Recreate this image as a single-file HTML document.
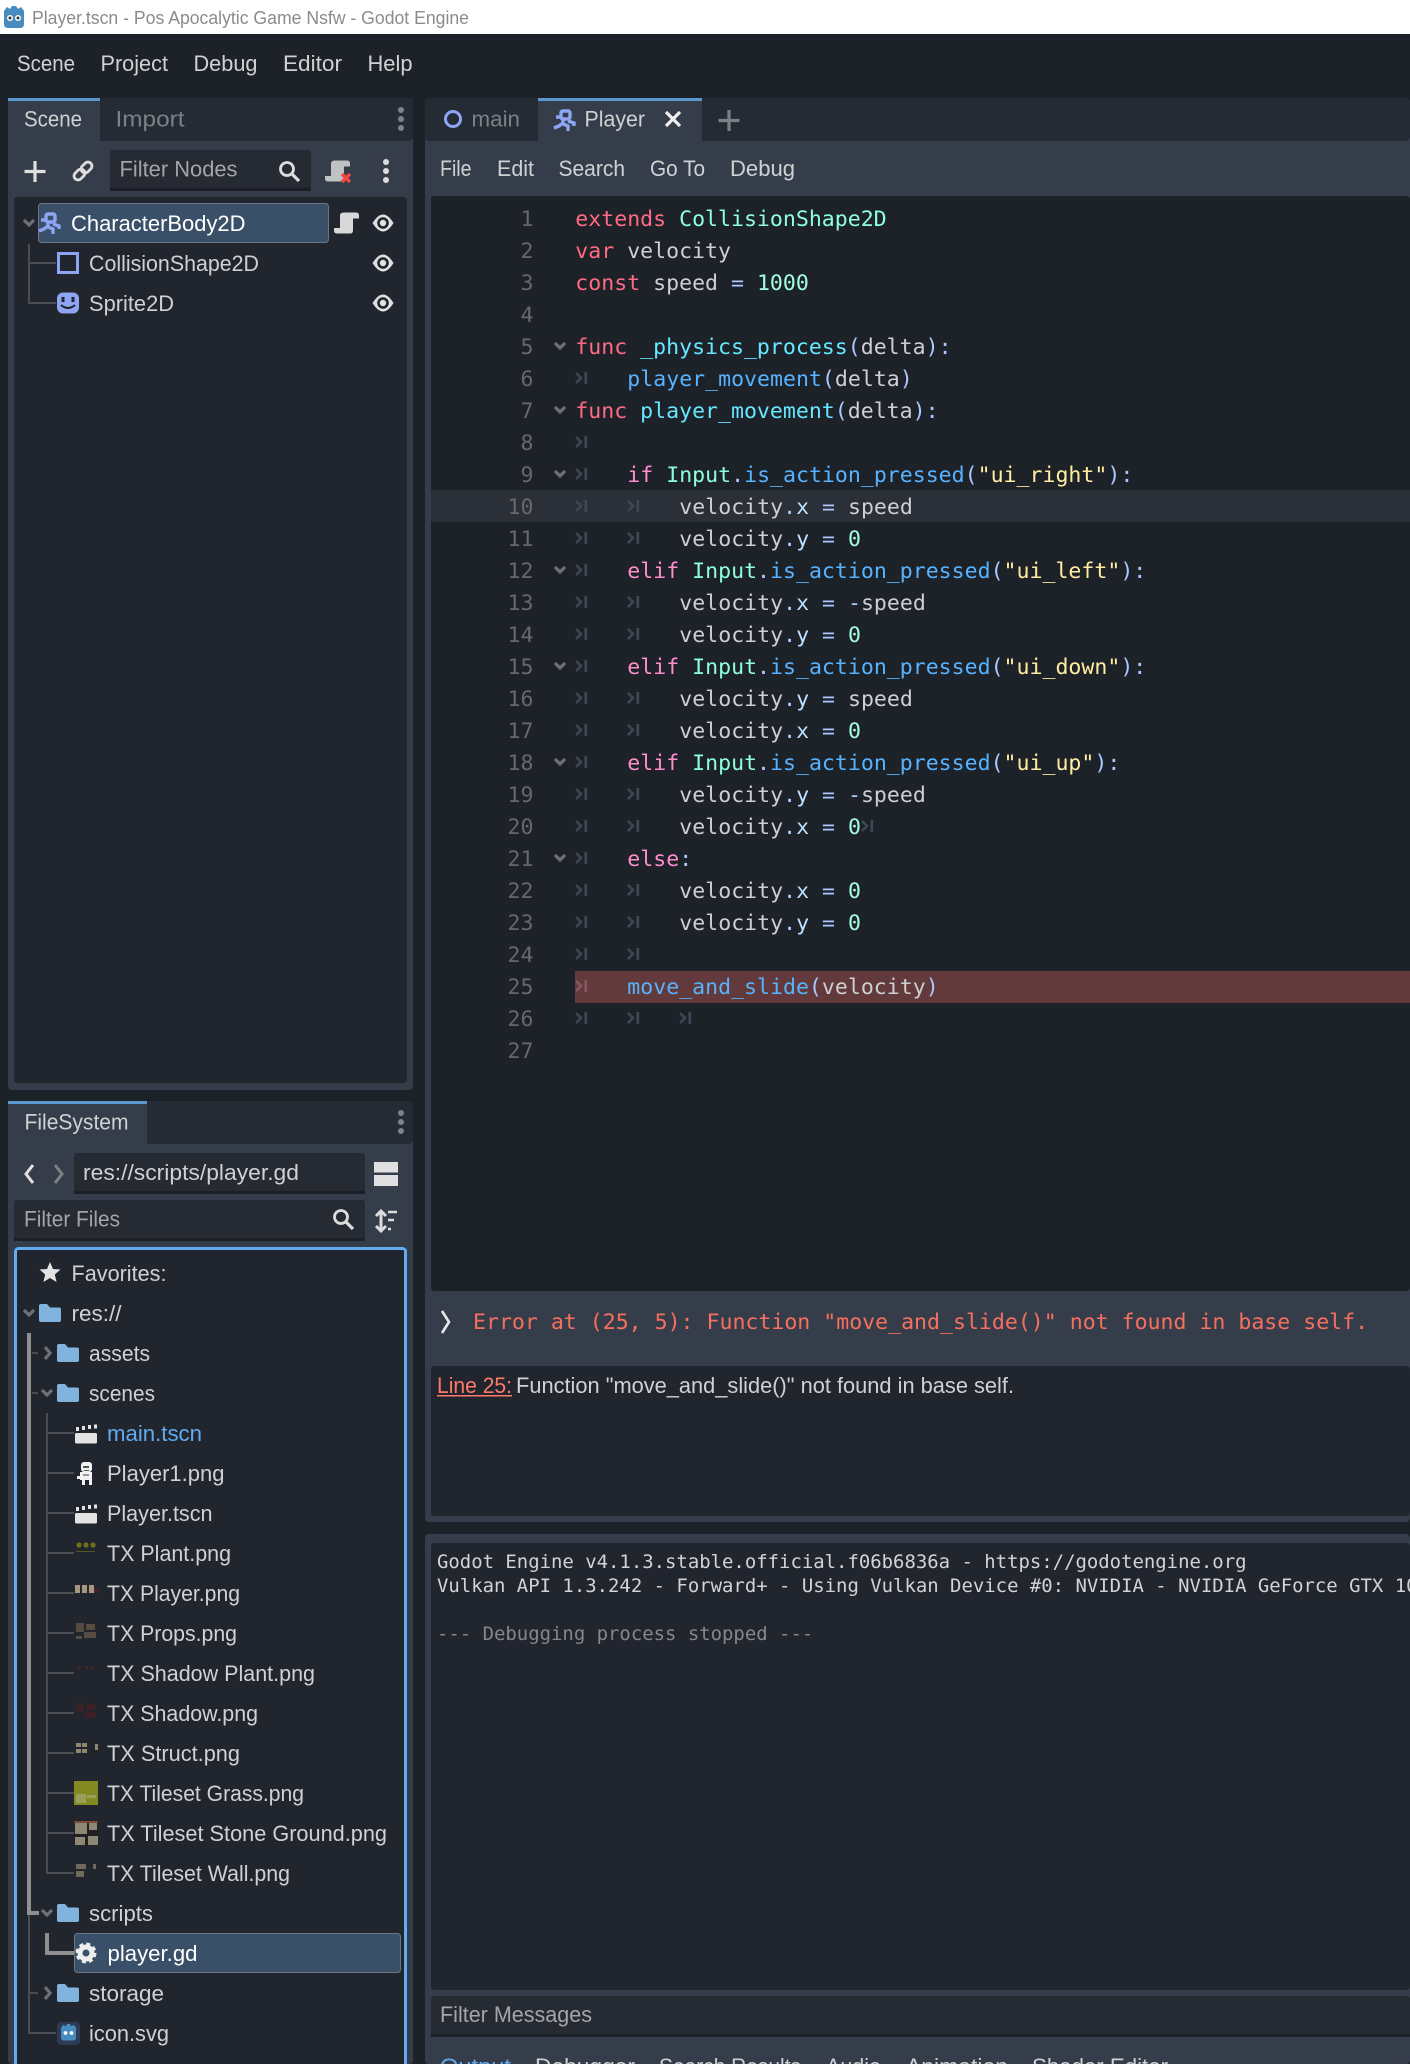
<!DOCTYPE html>
<html><head><meta charset="utf-8"><title>Godot</title>
<style>
html,body{margin:0;padding:0;background:#1d2229;width:1410px;height:2064px;overflow:hidden}
svg{display:block}
text{white-space:pre}
.u{font-family:"Liberation Sans",sans-serif;font-size:22px;fill:#d0d1d3}
.dim{fill:#a3a5a9}
.mut{fill:#7d8085}
.w{fill:#fff}
.b{fill:#62abf0}
.cd{font-family:"DejaVu Sans Mono","Liberation Mono",monospace;font-size:21.55px;fill:#cdcfd2}
.ln{fill:#66686d;text-anchor:end}
.k{fill:#ff6b82}.c{fill:#ff8ccc}.e{fill:#8fffdb}.f{fill:#57b3ff}.d{fill:#66e6ff}.s{fill:#abc9ff}.m{fill:#bce0ff}.n{fill:#a1ffe0}.q{fill:#ffeda1}
.op{font-family:"DejaVu Sans Mono","Liberation Mono",monospace;font-size:18.95px;fill:#d2d3d5}
.ch{fill:none;stroke:#6d7076;stroke-width:3.2}
.tl{stroke:#4a4d54;stroke-width:2;fill:none}
.th{fill:#8f8f8f}
</style></head><body>
<svg xmlns="http://www.w3.org/2000/svg" width="1410" height="2064" viewBox="0 0 1410 2064">
<defs>
<g id="t"><path d="M1 -5l5 5l-5 5" fill="none" stroke="#3f4756" stroke-width="2.6"/><rect x="9.5" y="-6" width="2.6" height="12" fill="#3f4756"/></g>
<g id="tr"><path d="M1 -5l5 5l-5 5" fill="none" stroke="#8a5560" stroke-width="2.6"/><rect x="9.5" y="-6" width="2.6" height="12" fill="#8a5560"/></g>
<path id="fd" d="M-5 -3l5 5l5 -5" class="ch" stroke="#5c5f65"/>
<g id="eye"><path d="M-10.500 0Q0 -17 10.500 0Q0 17 -10.500 0Z" fill="#e0e0e0"/><circle r="5.800" fill="#21252e"/><circle r="3.200" fill="#e0e0e0"/></g>
<path id="fo" d="M0 2q0-2 2-2h6l3 3.500h9q2 0 2 2v10.500q0 2-2 2H2q-2 0-2-2z" fill="#80b3dd"/>
<g id="cl"><rect x="-11" y="0" width="22" height="10.500" rx="1.500" fill="#e3e3e3"/><path d="M-10 -6v4h3v-4zM-4 -7v4h3v-4zM2 -8v4h3v-4zM8 -8.500v4h3v-4z" fill="#e3e3e3"/></g>
<g id="run" fill="none" stroke="#8da5f3" stroke-width="3.400"><rect x="-3" y="-9" width="9" height="8" rx="2"/><path d="M-1 -1v5l5 2v5M-1 3l-4 3l-5 2M-3 -3h-5M4 1l6 2v3"/></g>
<path id="sc" d="M-4 -10.500h12q3 0 3 3v3h-6v12q0 3-3 3h-13q-3 0-3-3v-2.500h6v-12.500q0-3 4-3z" fill="#d8d8d8"/>
<g id="se" fill="none" stroke="#dcdcdc" stroke-width="2.800"><circle cx="-3" cy="-3" r="6.500"/><path d="M2 2l7 7" stroke-width="3.200"/></g>
</defs>

<rect width="1410" height="2064" fill="#1d2229"/>
<!-- title bar -->
<rect width="1410" height="34" fill="#fff"/>
<g transform="translate(14,18)"><path d="M-10 -7l3-4 3 2 2-3h4l2 3 3-2 3 4v13q0 4-4 4h-12q-4 0-4-4z" fill="#478cbf"/><circle cx="-4" cy="0" r="3" fill="#fff"/><circle cx="4" cy="0" r="3" fill="#fff"/><circle cx="-4" cy="0" r="1.500" fill="#333"/><circle cx="4" cy="0" r="1.500" fill="#333"/></g>
<text x="32" y="24" font-family="Liberation Sans,sans-serif" font-size="18" fill="#8b8b8b" textLength="437" lengthAdjust="spacingAndGlyphs">Player.tscn - Pos Apocalytic Game Nsfw - Godot Engine</text>

<!-- menu -->
<text class="u" x="17" y="71" textLength="58" lengthAdjust="spacingAndGlyphs">Scene</text>
<text class="u" x="100.500" y="71" textLength="67.500" lengthAdjust="spacingAndGlyphs">Project</text>
<text class="u" x="193.500" y="71" textLength="64" lengthAdjust="spacingAndGlyphs">Debug</text>
<text class="u" x="283" y="71" textLength="59" lengthAdjust="spacingAndGlyphs">Editor</text>
<text class="u" x="367.500" y="71" textLength="45" lengthAdjust="spacingAndGlyphs">Help</text>

<!-- scene panel -->
<rect x="8" y="98" width="405" height="992" rx="4" fill="#363d4a"/>
<rect x="8" y="98" width="405" height="43" rx="4" fill="#252b34"/>
<rect x="8" y="98" width="92" height="43" fill="#363d4a"/>
<rect x="8" y="98" width="92" height="3" fill="#5a97cf"/>
<text class="u" x="24" y="126.500" textLength="58" lengthAdjust="spacingAndGlyphs">Scene</text>
<text class="u mut" x="115.500" y="126.500" textLength="69" lengthAdjust="spacingAndGlyphs">Import</text>
<g fill="#808287"><circle cx="401" cy="110" r="3"/><circle cx="401" cy="119" r="3"/><circle cx="401" cy="128" r="3"/></g>
<path d="M35 161v21M24.500 171.500h21" stroke="#e0e0e0" stroke-width="3.200"/>
<g transform="translate(83,171) rotate(-45)" fill="none" stroke="#dcdcdc" stroke-width="2.800"><rect x="-11" y="-4" width="12" height="8" rx="4"/><rect x="-1" y="-4" width="12" height="8" rx="4"/></g>
<rect x="110" y="150" width="201" height="41" rx="3" fill="#252a33"/>
<rect x="110" y="188" width="201" height="3" fill="#1c2026"/>
<text class="u dim" x="119.500" y="176.500" textLength="118" lengthAdjust="spacingAndGlyphs">Filter Nodes</text>
<use href="#se" x="290" y="172"/>
<use href="#sc" x="339" y="171" opacity=".85"/>
<path d="M342 174l8 8m0-8l-8 8" stroke="#f0493f" stroke-width="3.400"/>
<g fill="#dcdcdc"><circle cx="386" cy="162" r="3"/><circle cx="386" cy="171" r="3"/><circle cx="386" cy="180" r="3"/></g>

<rect x="14" y="197" width="393" height="886" rx="3" fill="#21252e"/>
<rect x="38.500" y="203.500" width="290" height="39" rx="3" fill="#3a5068" stroke="#6b7684"/>
<path d="M24 220l5 5l5-5" class="ch"/>
<use href="#run" x="49" y="223"/>
<text class="u w" x="71" y="231" textLength="174.500" lengthAdjust="spacingAndGlyphs">CharacterBody2D</text>
<use href="#sc" x="348" y="223"/>
<use href="#eye" x="383" y="223"/>
<path d="M29 244v59h27M29 263h27" class="tl"/>
<rect x="58.500" y="253.500" width="19" height="19" fill="none" stroke="#8da5f3" stroke-width="3"/>
<text class="u" x="89" y="271" textLength="170" lengthAdjust="spacingAndGlyphs">CollisionShape2D</text>
<use href="#eye" x="383" y="263"/>
<rect x="57" y="292.500" width="22" height="21" rx="6" fill="#8da5f3"/>
<path d="M61 305q7 6 14 0" stroke="#21252e" stroke-width="2" fill="none"/><path d="M63 297v5M73 297v5" stroke="#21252e" stroke-width="3"/>
<text class="u" x="89" y="311" textLength="85" lengthAdjust="spacingAndGlyphs">Sprite2D</text>
<use href="#eye" x="383" y="303"/>

<!-- filesystem panel -->
<rect x="8" y="1101" width="405" height="963" rx="4" fill="#363d4a"/>
<rect x="8" y="1101" width="405" height="43" rx="4" fill="#252b34"/>
<rect x="8" y="1101" width="139" height="43" fill="#363d4a"/>
<rect x="8" y="1101" width="139" height="3" fill="#5a97cf"/>
<text class="u" x="24.500" y="1129.500" textLength="104" lengthAdjust="spacingAndGlyphs">FileSystem</text>
<g fill="#808287"><circle cx="401" cy="1113" r="3"/><circle cx="401" cy="1122" r="3"/><circle cx="401" cy="1131" r="3"/></g>
<path d="M33 1165l-7 9l7 9" fill="none" stroke="#e0e0e0" stroke-width="3"/>
<path d="M55 1165l7 9l-7 9" fill="none" stroke="#7d8085" stroke-width="3"/>
<rect x="74" y="1153" width="291" height="41" rx="3" fill="#252a33"/>
<rect x="74" y="1191" width="291" height="3" fill="#1c2026"/>
<text class="u" x="83" y="1180" textLength="216" lengthAdjust="spacingAndGlyphs">res://scripts/player.gd</text>
<rect x="374" y="1162" width="24" height="10.500" fill="#e0e0e0"/><rect x="374" y="1175" width="24" height="11" fill="#e0e0e0"/>
<rect x="14" y="1200" width="351" height="41" rx="3" fill="#252a33"/>
<rect x="14" y="1238" width="351" height="3" fill="#1c2026"/>
<text class="u dim" x="24" y="1226.500" textLength="96" lengthAdjust="spacingAndGlyphs">Filter Files</text>
<use href="#se" x="344" y="1220"/>
<path d="M381 1212v18M376 1216l5-5l5 5M376 1226l5 5l5-5" fill="none" stroke="#dcdcdc" stroke-width="3"/>
<path d="M388 1212h9M388 1220h6M388 1229h3" stroke="#dcdcdc" stroke-width="2.600"/>

<rect x="15.500" y="1248.500" width="390" height="830" rx="3" fill="#21252e" stroke="#62abf0" stroke-width="3"/>

<!-- fs tree lines -->
<rect x="27" y="1333" width="4" height="582" class="th"/>
<rect x="27" y="1911" width="12" height="4" class="th"/>
<path d="M29 1915v118h27M29 1993h9M32 1353h6M32 1393h6" class="tl" stroke-width="2"/>
<path d="M47 1413v460h27M47 1433h27M47 1473h27M47 1513h27M47 1553h27M47 1593h27M47 1633h27M47 1673h27M47 1713h27M47 1753h27M47 1793h27M47 1833h27" class="tl"/>
<path d="M47 1933v20h27" fill="none" stroke="#8f8f8f" stroke-width="4"/>

<path d="M50 1262l3 7 7.500.5-5.700 5 1.800 7.500-6.600-4-6.600 4 1.800-7.500-5.700-5 7.500-.5z" fill="#e3e3e3"/>
<text class="u" x="71.500" y="1281" textLength="95" lengthAdjust="spacingAndGlyphs">Favorites:</text>
<path d="M24 1310l5 5l5-5" class="ch"/>
<use href="#fo" x="39" y="1304"/>
<text class="u" x="71.500" y="1321" textLength="50" lengthAdjust="spacingAndGlyphs">res://</text>
<path d="M45 1347l5 6l-5 6" class="ch"/>
<use href="#fo" x="57" y="1344"/>
<text class="u" x="89" y="1361" textLength="61" lengthAdjust="spacingAndGlyphs">assets</text>
<path d="M42 1390l5 5l5-5" class="ch"/>
<use href="#fo" x="57" y="1384"/>
<text class="u" x="89" y="1401" textLength="66" lengthAdjust="spacingAndGlyphs">scenes</text>

<use href="#cl" x="86" y="1433"/>
<text class="u b" x="107" y="1441" textLength="95" lengthAdjust="spacingAndGlyphs">main.tscn</text>
<g fill="#f2f2f2"><rect x="81" y="1462" width="11" height="10" rx="3"/><rect x="80" y="1472" width="12" height="8"/><rect x="77" y="1476" width="5" height="3"/><rect x="82" y="1480" width="3" height="5"/><rect x="89" y="1480" width="3" height="5"/></g>
<rect x="83" y="1466" width="6" height="2" fill="#555"/><rect x="84" y="1470" width="5" height="1" fill="#555"/><rect x="83" y="1474" width="6" height="2" fill="#999"/>
<text class="u" x="107" y="1481" textLength="117.500" lengthAdjust="spacingAndGlyphs">Player1.png</text>
<use href="#cl" x="86" y="1513"/>
<text class="u" x="107" y="1521" textLength="105.500" lengthAdjust="spacingAndGlyphs">Player.tscn</text>

<g fill="#6f7118"><circle cx="79" cy="1545" r="2.600"/><circle cx="86" cy="1545" r="2.600"/><circle cx="93" cy="1545" r="2.600"/><rect x="76" y="1551" width="19" height="1" fill="#55571c"/></g>
<text class="u" x="107" y="1561" textLength="124" lengthAdjust="spacingAndGlyphs">TX Plant.png</text>
<g fill="#a8967f"><rect x="75" y="1585" width="5" height="8"/><rect x="82" y="1585" width="5" height="8"/><rect x="89" y="1585" width="5" height="8"/></g><rect x="94" y="1589" width="5" height="4" fill="#4a2320"/>
<text class="u" x="107" y="1601" textLength="133" lengthAdjust="spacingAndGlyphs">TX Player.png</text>
<g fill="#6a5a48" opacity=".75"><rect x="76" y="1623" width="8" height="9"/><rect x="86" y="1624" width="9" height="6"/><rect x="84" y="1632" width="12" height="6"/><rect x="76" y="1636" width="6" height="3"/></g>
<text class="u" x="107" y="1641" textLength="130" lengthAdjust="spacingAndGlyphs">TX Props.png</text>
<g fill="#4a2323"><rect x="78" y="1666" width="3" height="3"/><rect x="85" y="1666" width="3" height="3"/><rect x="91" y="1666" width="3" height="3"/></g>
<text class="u" x="107" y="1681" textLength="208" lengthAdjust="spacingAndGlyphs">TX Shadow Plant.png</text>
<g fill="#4a2020" opacity=".6"><rect x="76" y="1703" width="8" height="9"/><rect x="86" y="1704" width="9" height="6"/><rect x="84" y="1712" width="12" height="6"/></g>
<text class="u" x="107" y="1721" textLength="151" lengthAdjust="spacingAndGlyphs">TX Shadow.png</text>
<g fill="#8f866c"><rect x="76" y="1743" width="5" height="4"/><rect x="82" y="1743" width="5" height="4"/><rect x="76" y="1749" width="5" height="4"/><rect x="82" y="1749" width="5" height="4"/><rect x="95" y="1744" width="3" height="6"/></g>
<text class="u" x="107" y="1761" textLength="133" lengthAdjust="spacingAndGlyphs">TX Struct.png</text>
<rect x="74" y="1781" width="24" height="24" fill="#848a22"/><rect x="76" y="1794" width="10" height="9" fill="#9aa05a"/><rect x="87" y="1795" width="9" height="3" fill="#9aa05a"/>
<text class="u" x="107" y="1801" textLength="197" lengthAdjust="spacingAndGlyphs">TX Tileset Grass.png</text>
<rect x="74" y="1821" width="24" height="24" fill="#211f20"/><g fill="#8f8776"><rect x="75" y="1822" width="12" height="12"/><rect x="89" y="1822" width="8" height="8"/><rect x="75" y="1837" width="10" height="8"/><rect x="88" y="1836" width="10" height="9"/></g><rect x="74" y="1821" width="24" height="2" fill="#7a4a35"/>
<text class="u" x="107" y="1841" textLength="280" lengthAdjust="spacingAndGlyphs">TX Tileset Stone Ground.png</text>
<g fill="#6f6a5c"><rect x="76" y="1864" width="10" height="5"/><rect x="76" y="1871" width="8" height="6"/><rect x="93" y="1864" width="3" height="5"/></g>
<text class="u" x="107" y="1881" textLength="183" lengthAdjust="spacingAndGlyphs">TX Tileset Wall.png</text>

<path d="M42 1910l5 5l5-5" class="ch"/>
<use href="#fo" x="57" y="1904"/>
<text class="u" x="89" y="1921" textLength="64" lengthAdjust="spacingAndGlyphs">scripts</text>
<rect x="74.500" y="1933.500" width="326" height="39" rx="3" fill="#3a5068" stroke="#6b7684"/>
<circle cx="86" cy="1953" r="6" fill="none" stroke="#eee" stroke-width="5"/><circle cx="86" cy="1953" r="9" fill="none" stroke="#eee" stroke-width="3" stroke-dasharray="4 3.070"/>
<text class="u w" x="107.500" y="1961" textLength="90" lengthAdjust="spacingAndGlyphs">player.gd</text>
<path d="M45 1987l5 6l-5 6" class="ch"/>
<use href="#fo" x="57" y="1984"/>
<text class="u" x="89" y="2001" textLength="75" lengthAdjust="spacingAndGlyphs">storage</text>
<rect x="57" y="2022" width="23" height="23" rx="4" fill="#2f3a54"/>
<g transform="translate(68.500,2033) scale(.75)"><path d="M-10 -7l3-4 3 2 2-3h4l2 3 3-2 3 4v13q0 4-4 4h-12q-4 0-4-4z" fill="#478cbf"/><circle cx="-4" cy="0" r="2.500" fill="#fff"/><circle cx="4" cy="0" r="2.500" fill="#fff"/></g>
<text class="u" x="89" y="2041" textLength="80" lengthAdjust="spacingAndGlyphs">icon.svg</text>

<!-- right panel -->
<rect x="425" y="98" width="985" height="1424" rx="4" fill="#363d4a"/>
<rect x="425" y="98" width="985" height="43" rx="4" fill="#252b34"/>
<rect x="538" y="98" width="164" height="43" fill="#363d4a"/>
<rect x="538" y="98" width="164" height="3" fill="#5a97cf"/>
<circle cx="453" cy="119" r="7.500" fill="none" stroke="#8da5f3" stroke-width="3"/>
<text class="u mut" x="471.500" y="126.500" textLength="48.500" lengthAdjust="spacingAndGlyphs">main</text>
<use href="#run" x="564" y="120"/>
<text class="u" x="584.500" y="126.500" textLength="60.500" lengthAdjust="spacingAndGlyphs">Player</text>
<path d="M666 112l14 14m0-14l-14 14" stroke="#f0f0f0" stroke-width="3.200"/>
<path d="M729 110v21M718.500 120.500h21" stroke="#7d8085" stroke-width="3.200"/>
<text class="u" x="440" y="176" textLength="31.500" lengthAdjust="spacingAndGlyphs">File</text>
<text class="u" x="497" y="176" textLength="37" lengthAdjust="spacingAndGlyphs">Edit</text>
<text class="u" x="558.500" y="176" textLength="66.500" lengthAdjust="spacingAndGlyphs">Search</text>
<text class="u" x="650" y="176" textLength="55" lengthAdjust="spacingAndGlyphs">Go To</text>
<text class="u" x="730" y="176" textLength="65" lengthAdjust="spacingAndGlyphs">Debug</text>

<!-- code editor -->
<rect x="431" y="196" width="979" height="1095" rx="3" fill="#1d2229"/>
<rect x="431" y="490" width="979" height="32" fill="#2b2f37"/>
<rect x="575" y="971" width="835" height="32" fill="#623a3b"/>

<g class="cd ln" transform="translate(0.500,1)">
<text x="533" y="225">1</text><text x="533" y="257">2</text><text x="533" y="289">3</text><text x="533" y="321">4</text><text x="533" y="353">5</text><text x="533" y="385">6</text><text x="533" y="417">7</text><text x="533" y="449">8</text><text x="533" y="481">9</text><text x="533" y="513">10</text><text x="533" y="545">11</text><text x="533" y="577">12</text><text x="533" y="609">13</text><text x="533" y="641">14</text><text x="533" y="673">15</text><text x="533" y="705">16</text><text x="533" y="737">17</text><text x="533" y="769">18</text><text x="533" y="801">19</text><text x="533" y="833">20</text><text x="533" y="865">21</text><text x="533" y="897">22</text><text x="533" y="929">23</text><text x="533" y="961">24</text><text x="533" y="993">25</text><text x="533" y="1025">26</text><text x="533" y="1057">27</text>
</g>
<!-- fold -->
<use href="#fd" x="560" y="346"/><use href="#fd" x="560" y="410"/><use href="#fd" x="560" y="474"/><use href="#fd" x="560" y="570"/><use href="#fd" x="560" y="666"/><use href="#fd" x="560" y="762"/><use href="#fd" x="560" y="858"/>
<!-- tabs -->
<use href="#t" x="575" y="378"/><use href="#t" x="575" y="442"/><use href="#t" x="575" y="474"/>
<use href="#t" x="575" y="506"/><use href="#t" x="627" y="506"/>
<use href="#t" x="575" y="538"/><use href="#t" x="627" y="538"/>
<use href="#t" x="575" y="570"/>
<use href="#t" x="575" y="602"/><use href="#t" x="627" y="602"/>
<use href="#t" x="575" y="634"/><use href="#t" x="627" y="634"/>
<use href="#t" x="575" y="666"/>
<use href="#t" x="575" y="698"/><use href="#t" x="627" y="698"/>
<use href="#t" x="575" y="730"/><use href="#t" x="627" y="730"/>
<use href="#t" x="575" y="762"/>
<use href="#t" x="575" y="794"/><use href="#t" x="627" y="794"/>
<use href="#t" x="575" y="826"/><use href="#t" x="627" y="826"/><use href="#t" x="861" y="826"/>
<use href="#t" x="575" y="858"/>
<use href="#t" x="575" y="890"/><use href="#t" x="627" y="890"/>
<use href="#t" x="575" y="922"/><use href="#t" x="627" y="922"/>
<use href="#t" x="575" y="954"/><use href="#t" x="627" y="954"/>
<use href="#tr" x="575" y="986"/>
<use href="#t" x="575" y="1018"/><use href="#t" x="627" y="1018"/><use href="#t" x="679" y="1018"/>

<g class="cd" transform="translate(-0.700,1)">
<text x="576" y="225"><tspan class="k">extends</tspan> <tspan class="e">CollisionShape2D</tspan></text>
<text x="576" y="257"><tspan class="k">var</tspan> velocity</text>
<text x="576" y="289"><tspan class="k">const</tspan> speed <tspan class="s">=</tspan> <tspan class="n">1000</tspan></text>
<text x="576" y="353"><tspan class="k">func</tspan> <tspan class="d">_physics_process</tspan><tspan class="s">(</tspan>delta<tspan class="s">):</tspan></text>
<text x="628" y="385"><tspan class="f">player_movement</tspan><tspan class="s">(</tspan>delta<tspan class="s">)</tspan></text>
<text x="576" y="417"><tspan class="k">func</tspan> <tspan class="d">player_movement</tspan><tspan class="s">(</tspan>delta<tspan class="s">):</tspan></text>
<text x="628" y="481"><tspan class="c">if</tspan> <tspan class="e">Input</tspan><tspan class="s">.</tspan><tspan class="f">is_action_pressed</tspan><tspan class="s">(</tspan><tspan class="q">"ui_right"</tspan><tspan class="s">):</tspan></text>
<text x="680" y="513">velocity<tspan class="s">.</tspan><tspan class="m">x</tspan> <tspan class="s">=</tspan> speed</text>
<text x="680" y="545">velocity<tspan class="s">.</tspan><tspan class="m">y</tspan> <tspan class="s">=</tspan> <tspan class="n">0</tspan></text>
<text x="628" y="577"><tspan class="c">elif</tspan> <tspan class="e">Input</tspan><tspan class="s">.</tspan><tspan class="f">is_action_pressed</tspan><tspan class="s">(</tspan><tspan class="q">"ui_left"</tspan><tspan class="s">):</tspan></text>
<text x="680" y="609">velocity<tspan class="s">.</tspan><tspan class="m">x</tspan> <tspan class="s">= -</tspan>speed</text>
<text x="680" y="641">velocity<tspan class="s">.</tspan><tspan class="m">y</tspan> <tspan class="s">=</tspan> <tspan class="n">0</tspan></text>
<text x="628" y="673"><tspan class="c">elif</tspan> <tspan class="e">Input</tspan><tspan class="s">.</tspan><tspan class="f">is_action_pressed</tspan><tspan class="s">(</tspan><tspan class="q">"ui_down"</tspan><tspan class="s">):</tspan></text>
<text x="680" y="705">velocity<tspan class="s">.</tspan><tspan class="m">y</tspan> <tspan class="s">=</tspan> speed</text>
<text x="680" y="737">velocity<tspan class="s">.</tspan><tspan class="m">x</tspan> <tspan class="s">=</tspan> <tspan class="n">0</tspan></text>
<text x="628" y="769"><tspan class="c">elif</tspan> <tspan class="e">Input</tspan><tspan class="s">.</tspan><tspan class="f">is_action_pressed</tspan><tspan class="s">(</tspan><tspan class="q">"ui_up"</tspan><tspan class="s">):</tspan></text>
<text x="680" y="801">velocity<tspan class="s">.</tspan><tspan class="m">y</tspan> <tspan class="s">= -</tspan>speed</text>
<text x="680" y="833">velocity<tspan class="s">.</tspan><tspan class="m">x</tspan> <tspan class="s">=</tspan> <tspan class="n">0</tspan></text>
<text x="628" y="865"><tspan class="c">else</tspan><tspan class="s">:</tspan></text>
<text x="680" y="897">velocity<tspan class="s">.</tspan><tspan class="m">x</tspan> <tspan class="s">=</tspan> <tspan class="n">0</tspan></text>
<text x="680" y="929">velocity<tspan class="s">.</tspan><tspan class="m">y</tspan> <tspan class="s">=</tspan> <tspan class="n">0</tspan></text>
<text x="628" y="993"><tspan class="f">move_and_slide</tspan><tspan class="s">(</tspan>velocity<tspan class="s">)</tspan></text>
</g>

<!-- error -->
<path d="M442 1311l7 11l-7 11" fill="none" stroke="#e8e8e8" stroke-width="2.600"/>
<text class="cd" x="473" y="1329" style="fill:#f7705f">Error at (25, 5): Function "move_and_slide()" not found in base self.</text>
<rect x="431" y="1366" width="979" height="150" rx="3" fill="#21252e"/>
<text class="u" x="437" y="1393" style="fill:#ff786b" textLength="75" lengthAdjust="spacingAndGlyphs">Line 25:</text>
<rect x="437" y="1395" width="75" height="1.500" fill="#ff786b"/>
<text class="u" x="516" y="1393" textLength="498" lengthAdjust="spacingAndGlyphs">Function "move_and_slide()" not found in base self.</text>

<!-- output -->
<rect x="425" y="1534" width="985" height="530" rx="4" fill="#363d4a"/>
<rect x="431" y="1543" width="979" height="447" rx="3" fill="#21252e"/>
<text class="op" x="437" y="1568">Godot Engine v4.1.3.stable.official.f06b6836a - https://godotengine.org</text>
<text class="op" x="437" y="1592">Vulkan API 1.3.242 - Forward+ - Using Vulkan Device #0: NVIDIA - NVIDIA GeForce GTX 1060</text>
<text class="op" x="437" y="1640" style="fill:#85878c">--- Debugging process stopped ---</text>
<rect x="431" y="1996" width="979" height="41" rx="3" fill="#252a33"/>
<rect x="431" y="2034" width="979" height="3" fill="#1c2026"/>
<text class="u dim" x="440" y="2022" textLength="152" lengthAdjust="spacingAndGlyphs">Filter Messages</text>
<text class="u b" x="440" y="2074" textLength="71" lengthAdjust="spacingAndGlyphs">Output</text>
<text class="u" x="535" y="2074" textLength="100" lengthAdjust="spacingAndGlyphs">Debugger</text>
<text class="u" x="659" y="2074" textLength="142" lengthAdjust="spacingAndGlyphs">Search Results</text>
<text class="u" x="826" y="2074" textLength="55" lengthAdjust="spacingAndGlyphs">Audio</text>
<text class="u" x="906" y="2074" textLength="102" lengthAdjust="spacingAndGlyphs">Animation</text>
<text class="u" x="1032" y="2074" textLength="136" lengthAdjust="spacingAndGlyphs">Shader Editor</text>
</svg>
</body></html>
